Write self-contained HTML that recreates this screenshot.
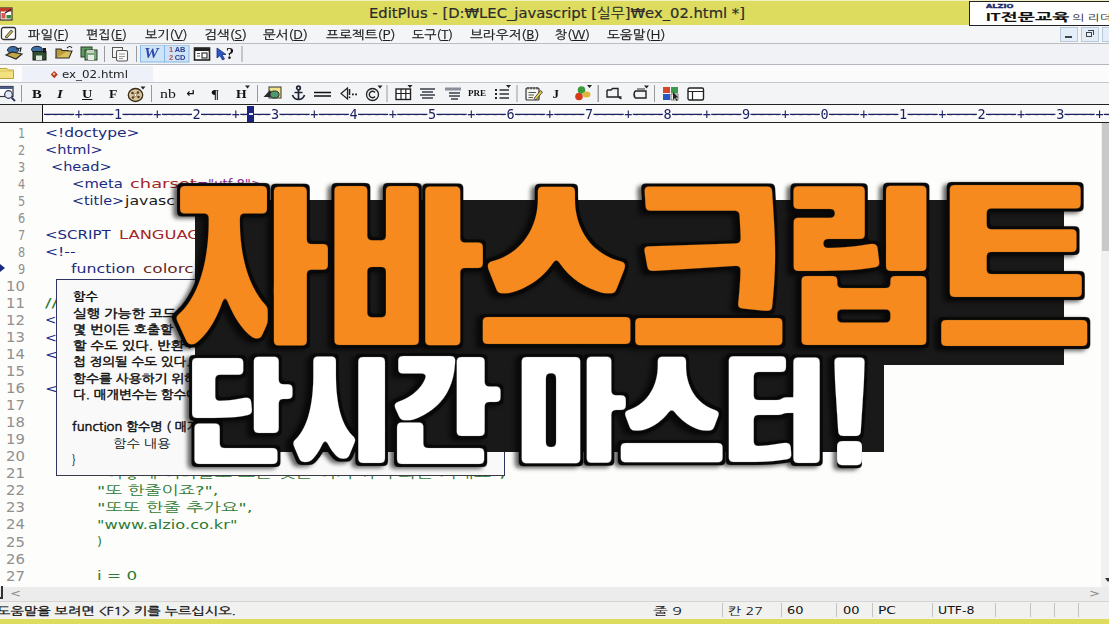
<!DOCTYPE html>
<html lang="ko"><head><meta charset="utf-8"><title>자바스크립트 단시간 마스터!</title>
<style>
html,body{margin:0;padding:0}
body{width:1109px;height:624px;overflow:hidden;position:relative;background:#fdfdfb;font-family:"Liberation Sans","NanumGothic","Noto Sans CJK KR",sans-serif}
.a{position:absolute}
.t{position:absolute;white-space:pre;transform-origin:0 50%;display:block}
.t u{text-decoration:underline;text-underline-offset:1px}
#app{position:absolute;left:0;top:0;width:1109px;height:624px;overflow:hidden}
.tb{top:85px;height:18px;line-height:18px;font-family:"Liberation Serif",serif;font-weight:700;font-size:13px;color:#111}
.sep{position:absolute;width:1px;background:#9a9a9a}
</style></head>
<body>
<div id="app">
<!-- code area -->
<div class="a" style="left:0;top:122px;width:1109px;height:466px;background:#fdfdfb"></div>
<div class="a" id="code" style="left:0;top:0;width:1109px;height:588px;overflow:hidden"><span class="t" style="left:18.0px;top:122.5px;height:20px;line-height:20px;font-family:'DejaVu Sans','NanumGothic','Noto Sans CJK KR',sans-serif;font-size:14px;font-weight:400;color:#8f8f8f;transform:scaleX(0.807);">1</span>
<span class="t" style="left:18.0px;top:139.5px;height:20px;line-height:20px;font-family:'DejaVu Sans','NanumGothic','Noto Sans CJK KR',sans-serif;font-size:14px;font-weight:400;color:#8f8f8f;transform:scaleX(0.807);">2</span>
<span class="t" style="left:18.0px;top:156.6px;height:20px;line-height:20px;font-family:'DejaVu Sans','NanumGothic','Noto Sans CJK KR',sans-serif;font-size:14px;font-weight:400;color:#8f8f8f;transform:scaleX(0.807);">3</span>
<span class="t" style="left:18.0px;top:173.6px;height:20px;line-height:20px;font-family:'DejaVu Sans','NanumGothic','Noto Sans CJK KR',sans-serif;font-size:14px;font-weight:400;color:#8f8f8f;transform:scaleX(0.807);">4</span>
<span class="t" style="left:18.0px;top:190.7px;height:20px;line-height:20px;font-family:'DejaVu Sans','NanumGothic','Noto Sans CJK KR',sans-serif;font-size:14px;font-weight:400;color:#8f8f8f;transform:scaleX(0.807);">5</span>
<span class="t" style="left:18.0px;top:207.7px;height:20px;line-height:20px;font-family:'DejaVu Sans','NanumGothic','Noto Sans CJK KR',sans-serif;font-size:14px;font-weight:400;color:#8f8f8f;transform:scaleX(0.807);">6</span>
<span class="t" style="left:18.0px;top:224.7px;height:20px;line-height:20px;font-family:'DejaVu Sans','NanumGothic','Noto Sans CJK KR',sans-serif;font-size:14px;font-weight:400;color:#8f8f8f;transform:scaleX(0.807);">7</span>
<span class="t" style="left:18.0px;top:241.8px;height:20px;line-height:20px;font-family:'DejaVu Sans','NanumGothic','Noto Sans CJK KR',sans-serif;font-size:14px;font-weight:400;color:#8f8f8f;transform:scaleX(0.807);">8</span>
<span class="t" style="left:18.0px;top:258.8px;height:20px;line-height:20px;font-family:'DejaVu Sans','NanumGothic','Noto Sans CJK KR',sans-serif;font-size:14px;font-weight:400;color:#8f8f8f;transform:scaleX(0.807);">9</span>
<span class="t" style="left:6.3px;top:275.9px;height:20px;line-height:20px;font-family:'DejaVu Sans','NanumGothic','Noto Sans CJK KR',sans-serif;font-size:14px;font-weight:400;color:#8f8f8f;transform:scaleX(1.060);">10</span>
<span class="t" style="left:6.3px;top:292.9px;height:20px;line-height:20px;font-family:'DejaVu Sans','NanumGothic','Noto Sans CJK KR',sans-serif;font-size:14px;font-weight:400;color:#8f8f8f;transform:scaleX(1.060);">11</span>
<span class="t" style="left:6.3px;top:309.9px;height:20px;line-height:20px;font-family:'DejaVu Sans','NanumGothic','Noto Sans CJK KR',sans-serif;font-size:14px;font-weight:400;color:#8f8f8f;transform:scaleX(1.060);">12</span>
<span class="t" style="left:6.3px;top:327.0px;height:20px;line-height:20px;font-family:'DejaVu Sans','NanumGothic','Noto Sans CJK KR',sans-serif;font-size:14px;font-weight:400;color:#8f8f8f;transform:scaleX(1.060);">13</span>
<span class="t" style="left:6.3px;top:344.0px;height:20px;line-height:20px;font-family:'DejaVu Sans','NanumGothic','Noto Sans CJK KR',sans-serif;font-size:14px;font-weight:400;color:#8f8f8f;transform:scaleX(1.060);">14</span>
<span class="t" style="left:6.3px;top:361.1px;height:20px;line-height:20px;font-family:'DejaVu Sans','NanumGothic','Noto Sans CJK KR',sans-serif;font-size:14px;font-weight:400;color:#8f8f8f;transform:scaleX(1.060);">15</span>
<span class="t" style="left:6.3px;top:378.1px;height:20px;line-height:20px;font-family:'DejaVu Sans','NanumGothic','Noto Sans CJK KR',sans-serif;font-size:14px;font-weight:400;color:#8f8f8f;transform:scaleX(1.060);">16</span>
<span class="t" style="left:6.3px;top:395.1px;height:20px;line-height:20px;font-family:'DejaVu Sans','NanumGothic','Noto Sans CJK KR',sans-serif;font-size:14px;font-weight:400;color:#8f8f8f;transform:scaleX(1.060);">17</span>
<span class="t" style="left:6.3px;top:412.2px;height:20px;line-height:20px;font-family:'DejaVu Sans','NanumGothic','Noto Sans CJK KR',sans-serif;font-size:14px;font-weight:400;color:#8f8f8f;transform:scaleX(1.060);">18</span>
<span class="t" style="left:6.3px;top:429.2px;height:20px;line-height:20px;font-family:'DejaVu Sans','NanumGothic','Noto Sans CJK KR',sans-serif;font-size:14px;font-weight:400;color:#8f8f8f;transform:scaleX(1.060);">19</span>
<span class="t" style="left:6.3px;top:446.3px;height:20px;line-height:20px;font-family:'DejaVu Sans','NanumGothic','Noto Sans CJK KR',sans-serif;font-size:14px;font-weight:400;color:#8f8f8f;transform:scaleX(1.060);">20</span>
<span class="t" style="left:6.3px;top:463.3px;height:20px;line-height:20px;font-family:'DejaVu Sans','NanumGothic','Noto Sans CJK KR',sans-serif;font-size:14px;font-weight:400;color:#8f8f8f;transform:scaleX(1.060);">21</span>
<span class="t" style="left:6.3px;top:480.3px;height:20px;line-height:20px;font-family:'DejaVu Sans','NanumGothic','Noto Sans CJK KR',sans-serif;font-size:14px;font-weight:400;color:#8f8f8f;transform:scaleX(1.060);">22</span>
<span class="t" style="left:6.3px;top:497.4px;height:20px;line-height:20px;font-family:'DejaVu Sans','NanumGothic','Noto Sans CJK KR',sans-serif;font-size:14px;font-weight:400;color:#8f8f8f;transform:scaleX(1.060);">23</span>
<span class="t" style="left:6.3px;top:514.4px;height:20px;line-height:20px;font-family:'DejaVu Sans','NanumGothic','Noto Sans CJK KR',sans-serif;font-size:14px;font-weight:400;color:#8f8f8f;transform:scaleX(1.060);">24</span>
<span class="t" style="left:6.3px;top:531.5px;height:20px;line-height:20px;font-family:'DejaVu Sans','NanumGothic','Noto Sans CJK KR',sans-serif;font-size:14px;font-weight:400;color:#8f8f8f;transform:scaleX(1.060);">25</span>
<span class="t" style="left:6.3px;top:548.5px;height:20px;line-height:20px;font-family:'DejaVu Sans','NanumGothic','Noto Sans CJK KR',sans-serif;font-size:14px;font-weight:400;color:#8f8f8f;transform:scaleX(1.060);">26</span>
<span class="t" style="left:6.3px;top:565.5px;height:20px;line-height:20px;font-family:'DejaVu Sans','NanumGothic','Noto Sans CJK KR',sans-serif;font-size:14px;font-weight:400;color:#8f8f8f;transform:scaleX(1.060);">27</span>
<span class="t" style="left:44.6px;top:123.0px;height:19px;line-height:19px;font-family:'DejaVu Sans','NanumGothic','Noto Sans CJK KR',sans-serif;font-size:13px;font-weight:400;color:#1b2a80;transform:scaleX(1.190);">&lt;!doctype&gt;</span>
<span class="t" style="left:44.6px;top:140.0px;height:19px;line-height:19px;font-family:'DejaVu Sans','NanumGothic','Noto Sans CJK KR',sans-serif;font-size:13px;font-weight:400;color:#1b2a80;transform:scaleX(1.122);">&lt;html&gt;</span>
<span class="t" style="left:51.4px;top:157.1px;height:19px;line-height:19px;font-family:'DejaVu Sans','NanumGothic','Noto Sans CJK KR',sans-serif;font-size:13px;font-weight:400;color:#1b2a80;transform:scaleX(1.117);">&lt;head&gt;</span>
<span class="t" style="left:72.0px;top:174.1px;height:19px;line-height:19px;font-family:'DejaVu Sans','NanumGothic','Noto Sans CJK KR',sans-serif;font-size:13px;font-weight:400;color:#1b2a80;transform:scaleX(1.138);">&lt;meta</span>
<span class="t" style="left:130.3px;top:174.1px;height:19px;line-height:19px;font-family:'DejaVu Sans','NanumGothic','Noto Sans CJK KR',sans-serif;font-size:13px;font-weight:400;color:#a3262a;transform:scaleX(1.373);">charset</span>
<span class="t" style="left:197.0px;top:174.1px;height:19px;line-height:19px;font-family:'DejaVu Sans','NanumGothic','Noto Sans CJK KR',sans-serif;font-size:13px;font-weight:400;color:#8a2a9a;transform:scaleX(1.017);">="utf-8"&gt;</span>
<span class="t" style="left:72.0px;top:191.2px;height:19px;line-height:19px;font-family:'DejaVu Sans','NanumGothic','Noto Sans CJK KR',sans-serif;font-size:13px;font-weight:400;color:#1b2a80;transform:scaleX(1.102);">&lt;title&gt;</span>
<span class="t" style="left:125.0px;top:191.2px;height:19px;line-height:19px;font-family:'DejaVu Sans','NanumGothic','Noto Sans CJK KR',sans-serif;font-size:13px;font-weight:400;color:#1a1a1a;transform:scaleX(1.214);">javasc</span>
<span class="t" style="left:44.6px;top:225.2px;height:19px;line-height:19px;font-family:'DejaVu Sans','NanumGothic','Noto Sans CJK KR',sans-serif;font-size:13px;font-weight:400;color:#1b2a80;transform:scaleX(1.155);">&lt;SCRIPT</span>
<span class="t" style="left:119.0px;top:225.2px;height:19px;line-height:19px;font-family:'DejaVu Sans','NanumGothic','Noto Sans CJK KR',sans-serif;font-size:13px;font-weight:400;color:#a3262a;transform:scaleX(1.256);">LANGUAG</span>
<span class="t" style="left:44.6px;top:242.3px;height:19px;line-height:19px;font-family:'DejaVu Sans','NanumGothic','Noto Sans CJK KR',sans-serif;font-size:13px;font-weight:400;color:#1b2a80;transform:scaleX(1.200);">&lt;!--</span>
<span class="t" style="left:71.0px;top:259.3px;height:19px;line-height:19px;font-family:'DejaVu Sans','NanumGothic','Noto Sans CJK KR',sans-serif;font-size:13px;font-weight:400;color:#1b2a80;transform:scaleX(1.211);">function</span>
<span class="t" style="left:143.4px;top:259.3px;height:19px;line-height:19px;font-family:'DejaVu Sans','NanumGothic','Noto Sans CJK KR',sans-serif;font-size:13px;font-weight:400;color:#6a2a2a;transform:scaleX(1.302);">colorc</span>
<span class="t" style="left:44.6px;top:293.4px;height:19px;line-height:19px;font-family:'DejaVu Sans','NanumGothic','Noto Sans CJK KR',sans-serif;font-size:13px;font-weight:400;color:#2c7a33;transform:scaleX(1.494);">//--&gt;</span>
<span class="t" style="left:45.0px;top:310.4px;height:19px;line-height:19px;font-family:'DejaVu Sans','NanumGothic','Noto Sans CJK KR',sans-serif;font-size:13px;font-weight:400;color:#1b2a80;transform:scaleX(1.033);">&lt;/SCR</span>
<span class="t" style="left:45.0px;top:327.5px;height:19px;line-height:19px;font-family:'DejaVu Sans','NanumGothic','Noto Sans CJK KR',sans-serif;font-size:13px;font-weight:400;color:#1b2a80;transform:scaleX(1.089);">&lt;/hea</span>
<span class="t" style="left:45.0px;top:344.5px;height:19px;line-height:19px;font-family:'DejaVu Sans','NanumGothic','Noto Sans CJK KR',sans-serif;font-size:13px;font-weight:400;color:#1b2a80;transform:scaleX(1.216);">&lt;bod</span>
<span class="t" style="left:45.0px;top:378.6px;height:19px;line-height:19px;font-family:'DejaVu Sans','NanumGothic','Noto Sans CJK KR',sans-serif;font-size:13px;font-weight:400;color:#1b2a80;transform:scaleX(1.273);">&lt;scri</span>
<span class="t" style="left:96.5px;top:464.3px;height:19px;line-height:19px;font-family:'DejaVu Sans','NanumGothic','Noto Sans CJK KR',sans-serif;font-size:13px;font-weight:400;color:#2c7a33;transform:scaleX(1.411);">"이렇게 여러줄로 쓰는 것은 여기 까지 되는 거네요",</span>
<span class="t" style="left:96.5px;top:480.8px;height:19px;line-height:19px;font-family:'DejaVu Sans','NanumGothic','Noto Sans CJK KR',sans-serif;font-size:13px;font-weight:400;color:#2c7a33;transform:scaleX(1.377);">"또 한줄이죠?",</span>
<span class="t" style="left:96.5px;top:497.9px;height:19px;line-height:19px;font-family:'DejaVu Sans','NanumGothic','Noto Sans CJK KR',sans-serif;font-size:13px;font-weight:400;color:#2c7a33;transform:scaleX(1.415);">"또또 한줄 추가요",</span>
<span class="t" style="left:96.5px;top:514.9px;height:19px;line-height:19px;font-family:'DejaVu Sans','NanumGothic','Noto Sans CJK KR',sans-serif;font-size:13px;font-weight:400;color:#2c7a33;transform:scaleX(1.247);">"www.alzio.co.kr"</span>
<span class="t" style="left:96.5px;top:532.0px;height:19px;line-height:19px;font-family:'DejaVu Sans','NanumGothic','Noto Sans CJK KR',sans-serif;font-size:13px;font-weight:400;color:#2c7a33;transform:scaleX(0.985);">)</span>
<span class="t" style="left:96.5px;top:566.0px;height:19px;line-height:19px;font-family:'DejaVu Sans','NanumGothic','Noto Sans CJK KR',sans-serif;font-size:13px;font-weight:400;color:#2c7a33;transform:scaleX(1.292);">i = 0</span>
<!-- current line arrow -->
<div class="a" style="left:0;top:264px;width:0;height:0;border-left:5px solid #1b2a80;border-top:4px solid transparent;border-bottom:4px solid transparent"></div>
</div>
<!-- vertical scrollbar -->
<div class="a" style="left:1101px;top:123px;width:8px;height:464px;background:#f1f1f1"></div>
<div class="a" style="left:1102px;top:123px;width:7px;height:128px;background:#c9c9c9"></div>
<div class="a" style="left:1105px;top:578px;width:0;height:0;border-top:4px solid #333;border-left:3px solid transparent;border-right:3px solid transparent"></div>
<!-- tooltip -->
<div class="a" id="tip" style="left:56px;top:279px;width:447px;height:195px;background:#f9f9fa;border:1px solid #2e3560;border-bottom-color:#3a3a44;border-right-color:#2e3560;box-sizing:content-box;overflow:hidden"></div>
<div class="a" style="left:0;top:0;width:504px;height:476px;overflow:hidden"><span class="t" style="left:72.7px;top:288.2px;height:18px;line-height:18px;font-family:'NanumGothic','Noto Sans CJK KR',sans-serif;font-size:12px;font-weight:700;color:#111;transform:scaleX(1.108);">함수</span>
<span class="t" style="left:72.7px;top:304.5px;height:18px;line-height:18px;font-family:'NanumGothic','Noto Sans CJK KR',sans-serif;font-size:12px;font-weight:400;color:#111;transform:scaleX(1.206);-webkit-text-stroke:0.45px #111;">실행 가능한 코드를 함수로 정의하면</span>
<span class="t" style="left:72.7px;top:320.8px;height:18px;line-height:18px;font-family:'NanumGothic','Noto Sans CJK KR',sans-serif;font-size:12px;font-weight:400;color:#111;transform:scaleX(1.171);-webkit-text-stroke:0.45px #111;">몇 번이든 호출할 수 있으며 값을 반환</span>
<span class="t" style="left:72.7px;top:337.0px;height:18px;line-height:18px;font-family:'NanumGothic','Noto Sans CJK KR',sans-serif;font-size:12px;font-weight:400;color:#111;transform:scaleX(1.201);-webkit-text-stroke:0.45px #111;">할 수도 있다. 반환 자료형과 함수는 중</span>
<span class="t" style="left:72.7px;top:353.3px;height:18px;line-height:18px;font-family:'NanumGothic','Noto Sans CJK KR',sans-serif;font-size:12px;font-weight:400;color:#111;transform:scaleX(1.129);-webkit-text-stroke:0.45px #111;">첩 정의될 수도 있다. 자바스크립트에서</span>
<span class="t" style="left:72.7px;top:369.6px;height:18px;line-height:18px;font-family:'NanumGothic','Noto Sans CJK KR',sans-serif;font-size:12px;font-weight:400;color:#111;transform:scaleX(1.148);-webkit-text-stroke:0.45px #111;">함수를 사용하기 위해서는 먼저 선언한</span>
<span class="t" style="left:72.7px;top:385.9px;height:18px;line-height:18px;font-family:'NanumGothic','Noto Sans CJK KR',sans-serif;font-size:12px;font-weight:400;color:#111;transform:scaleX(1.126);-webkit-text-stroke:0.45px #111;">다. 매개변수는 함수에 전달되는 값이다.</span>
<span class="t" style="left:72.0px;top:418.4px;height:18px;line-height:18px;font-family:'NanumGothic','Noto Sans CJK KR',sans-serif;font-size:12px;font-weight:400;color:#111;transform:scaleX(1.081);-webkit-text-stroke:0.45px #111;">function 함수명 ( 매개변수 ) {</span>
<span class="t" style="left:112.8px;top:434.7px;height:18px;line-height:18px;font-family:'NanumGothic','Noto Sans CJK KR',sans-serif;font-size:12px;font-weight:400;color:#111;transform:scaleX(1.188);">함수 내용</span>
<span class="t" style="left:72.0px;top:451.0px;height:18px;line-height:18px;font-family:'NanumGothic','Noto Sans CJK KR',sans-serif;font-size:12px;font-weight:400;color:#111;transform:scaleX(0.961);">}</span></div>
<!-- black blocks -->
<div class="a" style="left:195px;top:200px;width:869px;height:165px;background:#191919"></div>
<div class="a" style="left:195px;top:364px;width:689px;height:88px;background:#191919"></div>
<!-- big text -->
<div id="big" class="a" style="left:0;top:0;width:1109px;height:624px"><svg class="a" width="1109" height="624" viewBox="0 0 1109 624" style="left:0;top:0" font-family="Noto Sans CJK KR, NanumGothic, sans-serif" font-weight="900" font-size="200">
<defs><clipPath id="k1"><polygon points="-150,-337 115,-337 115,263 -150,263"/></clipPath><clipPath id="k2"><polygon points="123,-337 450,-337 450,263 123,263"/></clipPath><clipPath id="k3"><polygon points="-150,-337 114,-337 114,263 -150,263"/></clipPath><clipPath id="k4"><polygon points="114,-337 450,-337 450,263 114,263"/></clipPath><clipPath id="k5"><polygon points="-150,-337 450,-337 450,-42 -150,-42"/></clipPath><clipPath id="k6"><polygon points="-150,-42 450,-42 450,263 -150,263"/></clipPath><clipPath id="k7"><polygon points="-150,-337 450,-337 450,-32 -150,-32"/></clipPath><clipPath id="k8"><polygon points="-150,-32 450,-32 450,263 -150,263"/></clipPath><clipPath id="k9"><polygon points="-150,-337 128,-337 128,-61 -150,-61"/></clipPath><clipPath id="k10"><polygon points="128,-337 450,-337 450,-59.5 128,-59.5"/></clipPath><clipPath id="k11"><polygon points="-150,-59.5 450,-59.5 450,263 -150,263"/></clipPath><clipPath id="k12"><polygon points="-150,-337 450,-337 450,-38 -150,-38"/></clipPath><clipPath id="k13"><polygon points="-150,-38 450,-38 450,263 -150,263"/></clipPath><clipPath id="k14"><polygon points="-150,-337 119.5,-337 119.5,-54.5 -150,-54.5"/></clipPath><clipPath id="k15"><polygon points="119.5,-337 450,-337 450,-21 119.5,-21"/></clipPath><clipPath id="k16"><polygon points="-150,-54.5 119.5,-54.5 119.5,-21 450,-21 450,263 -150,263"/></clipPath><clipPath id="k17"><polygon points="-150,-337 130,-337 130,263 -150,263"/></clipPath><clipPath id="k18"><polygon points="130,-337 450,-337 450,263 130,263"/></clipPath><clipPath id="k19"><polygon points="-150,-337 114,-337 114,-50.5 -150,-50.5"/></clipPath><clipPath id="k20"><polygon points="114,-337 450,-337 450,-22.5 114,-22.5"/></clipPath><clipPath id="k21"><polygon points="-150,-50.5 114,-50.5 114,-22.5 450,-22.5 450,263 -150,263"/></clipPath><clipPath id="k22"><polygon points="-150,-337 113.5,-337 113.5,263 -150,263"/></clipPath><clipPath id="k23"><polygon points="113.5,-337 450,-337 450,263 113.5,263"/></clipPath><clipPath id="k24"><polygon points="-150,-337 450,-337 450,-42 -150,-42"/></clipPath><clipPath id="k25"><polygon points="-150,-42 450,-42 450,263 -150,263"/></clipPath><clipPath id="k26"><polygon points="-150,-337 134,-337 134,263 -150,263"/></clipPath><clipPath id="k27"><polygon points="134,-337 450,-337 450,263 134,263"/></clipPath><clipPath id="k28"><polygon points="-150,-337 450,-337 450,-47.5 -150,-47.5"/></clipPath><clipPath id="k29"><polygon points="-150,-47.5 450,-47.5 450,263 -150,263"/></clipPath><filter id="fb0" x="-20%" y="-20%" width="140%" height="140%" color-interpolation-filters="sRGB"><feMorphology in="SourceGraphic" operator="dilate" radius="6 1"/><feGaussianBlur stdDeviation="2.0"/><feComponentTransfer><feFuncA type="linear" slope="5" intercept="-2.0"/></feComponentTransfer></filter><filter id="ff0" x="-20%" y="-20%" width="140%" height="140%" color-interpolation-filters="sRGB"><feMorphology in="SourceGraphic" operator="erode" radius="0 2"/><feMorphology operator="dilate" radius="3 0"/><feGaussianBlur stdDeviation="2.0"/><feComponentTransfer><feFuncA type="linear" slope="5" intercept="-2.0"/></feComponentTransfer></filter><filter id="fb1" x="-20%" y="-20%" width="140%" height="140%" color-interpolation-filters="sRGB"><feMorphology in="SourceGraphic" operator="dilate" radius="6 5"/><feGaussianBlur stdDeviation="2.0"/><feComponentTransfer><feFuncA type="linear" slope="5" intercept="-2.0"/></feComponentTransfer></filter><filter id="ff1" x="-20%" y="-20%" width="140%" height="140%" color-interpolation-filters="sRGB"><feMorphology in="SourceGraphic" operator="dilate" radius="3 2"/><feGaussianBlur stdDeviation="2.0"/><feComponentTransfer><feFuncA type="linear" slope="5" intercept="-2.0"/></feComponentTransfer></filter><filter id="fb2" x="-20%" y="-20%" width="140%" height="140%" color-interpolation-filters="sRGB"><feMorphology in="SourceGraphic" operator="dilate" radius="8 5"/><feGaussianBlur stdDeviation="2.0"/><feComponentTransfer><feFuncA type="linear" slope="5" intercept="-2.0"/></feComponentTransfer></filter><filter id="ff2" x="-20%" y="-20%" width="140%" height="140%" color-interpolation-filters="sRGB"><feMorphology in="SourceGraphic" operator="dilate" radius="5 2"/><feGaussianBlur stdDeviation="2.0"/><feComponentTransfer><feFuncA type="linear" slope="5" intercept="-2.0"/></feComponentTransfer></filter><filter id="fb3" x="-20%" y="-20%" width="140%" height="140%" color-interpolation-filters="sRGB"><feMorphology in="SourceGraphic" operator="dilate" radius="6 3"/><feGaussianBlur stdDeviation="2.0"/><feComponentTransfer><feFuncA type="linear" slope="5" intercept="-2.0"/></feComponentTransfer></filter><filter id="ff3" x="-20%" y="-20%" width="140%" height="140%" color-interpolation-filters="sRGB"><feMorphology in="SourceGraphic" operator="dilate" radius="3 0"/><feGaussianBlur stdDeviation="2.0"/><feComponentTransfer><feFuncA type="linear" slope="5" intercept="-2.0"/></feComponentTransfer></filter><filter id="fb4" x="-20%" y="-20%" width="140%" height="140%" color-interpolation-filters="sRGB"><feMorphology in="SourceGraphic" operator="dilate" radius="6 2"/><feGaussianBlur stdDeviation="2.0"/><feComponentTransfer><feFuncA type="linear" slope="5" intercept="-2.0"/></feComponentTransfer></filter><filter id="ff4" x="-20%" y="-20%" width="140%" height="140%" color-interpolation-filters="sRGB"><feMorphology in="SourceGraphic" operator="erode" radius="0 1"/><feMorphology operator="dilate" radius="3 0"/><feGaussianBlur stdDeviation="2.0"/><feComponentTransfer><feFuncA type="linear" slope="5" intercept="-2.0"/></feComponentTransfer></filter><filter id="fb5" x="-20%" y="-20%" width="140%" height="140%" color-interpolation-filters="sRGB"><feMorphology in="SourceGraphic" operator="dilate" radius="6 3"/><feGaussianBlur stdDeviation="2.0"/><feComponentTransfer><feFuncA type="linear" slope="5" intercept="-2.0"/></feComponentTransfer></filter><filter id="ff5" x="-20%" y="-20%" width="140%" height="140%" color-interpolation-filters="sRGB"><feMorphology in="SourceGraphic" operator="dilate" radius="3 0"/><feGaussianBlur stdDeviation="2.0"/><feComponentTransfer><feFuncA type="linear" slope="5" intercept="-2.0"/></feComponentTransfer></filter><filter id="fb6" x="-20%" y="-20%" width="140%" height="140%" color-interpolation-filters="sRGB"><feMorphology in="SourceGraphic" operator="dilate" radius="7 3"/><feGaussianBlur stdDeviation="2.0"/><feComponentTransfer><feFuncA type="linear" slope="5" intercept="-2.0"/></feComponentTransfer></filter><filter id="ff6" x="-20%" y="-20%" width="140%" height="140%" color-interpolation-filters="sRGB"><feMorphology in="SourceGraphic" operator="dilate" radius="4 0"/><feGaussianBlur stdDeviation="2.0"/><feComponentTransfer><feFuncA type="linear" slope="5" intercept="-2.0"/></feComponentTransfer></filter><filter id="fb7" x="-20%" y="-20%" width="140%" height="140%" color-interpolation-filters="sRGB"><feMorphology in="SourceGraphic" operator="dilate" radius="8 4"/><feGaussianBlur stdDeviation="2.0"/><feComponentTransfer><feFuncA type="linear" slope="5" intercept="-2.0"/></feComponentTransfer></filter><filter id="ff7" x="-20%" y="-20%" width="140%" height="140%" color-interpolation-filters="sRGB"><feMorphology in="SourceGraphic" operator="dilate" radius="5 1"/><feGaussianBlur stdDeviation="2.0"/><feComponentTransfer><feFuncA type="linear" slope="5" intercept="-2.0"/></feComponentTransfer></filter><filter id="fb8" x="-20%" y="-20%" width="140%" height="140%" color-interpolation-filters="sRGB"><feMorphology in="SourceGraphic" operator="dilate" radius="6 0"/><feGaussianBlur stdDeviation="2.0"/><feComponentTransfer><feFuncA type="linear" slope="5" intercept="-2.0"/></feComponentTransfer></filter><filter id="ff8" x="-20%" y="-20%" width="140%" height="140%" color-interpolation-filters="sRGB"><feMorphology in="SourceGraphic" operator="erode" radius="0 3"/><feMorphology operator="dilate" radius="3 0"/><feGaussianBlur stdDeviation="2.0"/><feComponentTransfer><feFuncA type="linear" slope="5" intercept="-2.0"/></feComponentTransfer></filter><filter id="fb9" x="-20%" y="-20%" width="140%" height="140%" color-interpolation-filters="sRGB"><feMorphology in="SourceGraphic" operator="dilate" radius="8 3"/><feGaussianBlur stdDeviation="2.0"/><feComponentTransfer><feFuncA type="linear" slope="5" intercept="-2.0"/></feComponentTransfer></filter><filter id="ff9" x="-20%" y="-20%" width="140%" height="140%" color-interpolation-filters="sRGB"><feMorphology in="SourceGraphic" operator="dilate" radius="5 0"/><feGaussianBlur stdDeviation="2.0"/><feComponentTransfer><feFuncA type="linear" slope="5" intercept="-2.0"/></feComponentTransfer></filter><filter id="fb10" x="-20%" y="-20%" width="140%" height="140%" color-interpolation-filters="sRGB"><feMorphology in="SourceGraphic" operator="dilate" radius="12 11"/><feGaussianBlur stdDeviation="2.0"/><feComponentTransfer><feFuncA type="linear" slope="5" intercept="-2.0"/></feComponentTransfer></filter><filter id="ff10" x="-20%" y="-20%" width="140%" height="140%" color-interpolation-filters="sRGB"><feMorphology in="SourceGraphic" operator="dilate" radius="9 8"/><feGaussianBlur stdDeviation="2.0"/><feComponentTransfer><feFuncA type="linear" slope="5" intercept="-2.0"/></feComponentTransfer></filter></defs>
<g style="filter:drop-shadow(-3.5px 2px 2px rgba(0,0,0,.6))"><g fill="#080808"><g filter="url(#fb0)"><g transform="translate(175.27 365.48) scale(0.7783 1.1923)"><g clip-path="url(#k1)"><text>자</text></g></g></g>
<g filter="url(#fb0)"><g transform="translate(327.40 376.11) scale(0.8414 1.2378)"><g clip-path="url(#k3)"><text>바</text></g></g></g>
<g filter="url(#fb0)"><g transform="translate(479.66 348.67) scale(0.8341 1.1846)"><g clip-path="url(#k6)"><text>스</text></g></g></g>
<g filter="url(#fb0)"><g transform="translate(635.12 354.04) scale(0.8946 1.1026) skewX(4.5)"><g clip-path="url(#k7)"><text>크</text></g></g></g>
<g filter="url(#fb0)"><g transform="translate(632.18 347.59) scale(0.8318 1.1885)"><g clip-path="url(#k8)"><text>크</text></g></g></g>
<g filter="url(#fb0)"><g transform="translate(749.00 326.15) scale(1.0625 0.8396)"><g clip-path="url(#k10)"><text>립</text></g></g></g>
<g filter="url(#fb0)"><g transform="translate(928.21 352.28) scale(0.9440 1.0771)"><g clip-path="url(#k12)"><text>트</text></g></g></g>
<g filter="url(#fb0)"><g transform="translate(938.23 347.55) scale(0.8250 1.1500)"><g clip-path="url(#k13)"><text>트</text></g></g></g></g>
<g fill="#080808"><g filter="url(#fb1)"><g transform="translate(173.65 326.82) scale(0.8362 0.8199)"><g clip-path="url(#k2)"><text>자</text></g></g></g>
<g filter="url(#fb1)"><g transform="translate(317.72 326.82) scale(0.8966 0.8199)"><g clip-path="url(#k4)"><text>바</text></g></g></g></g>
<g fill="#080808"><g filter="url(#fb2)"><g transform="translate(484.63 347.64) scale(0.7870 1.0025)"><g clip-path="url(#k5)"><text>스</text></g></g></g></g>
<g fill="#080808"><g filter="url(#fb3)"><g transform="translate(784.00 330.30) scale(0.7500 0.8947)"><g clip-path="url(#k9)"><text>립</text></g></g></g></g>
<g fill="#080808"><g filter="url(#fb4)"><g transform="translate(769.58 329.06) scale(0.9370 0.9610)"><g clip-path="url(#k11)"><text>립</text></g></g></g></g>
<g fill="#080808"><g filter="url(#fb5)"><g transform="translate(188.05 458.67) scale(0.5344 0.6559)"><g clip-path="url(#k14)"><text>단</text></g></g></g>
<g filter="url(#fb5)"><g transform="translate(184.18 451.69) scale(0.5873 0.5603)"><g clip-path="url(#k15)"><text>단</text></g></g></g>
<g filter="url(#fb5)"><g transform="translate(177.90 452.69) scale(0.5969 0.6254)"><g clip-path="url(#k16)"><text>단</text></g></g></g>
<g filter="url(#fb5)"><g transform="translate(276.94 452.02) scale(0.6406 0.5622)"><g clip-path="url(#k18)"><text>시</text></g></g></g>
<g filter="url(#fb5)"><g transform="translate(376.26 456.62) scale(0.6768 0.5895)"><g clip-path="url(#k20)"><text>간</text></g></g></g>
<g filter="url(#fb5)"><g transform="translate(379.78 452.73) scale(0.6287 0.6231)"><g clip-path="url(#k21)"><text>간</text></g></g></g>
<g filter="url(#fb5)"><g transform="translate(518.88 452.02) scale(0.5741 0.5622)"><g clip-path="url(#k23)"><text>마</text></g></g></g>
<g filter="url(#fb5)"><g transform="translate(619.65 464.18) scale(0.5641 0.7385)"><g clip-path="url(#k25)"><text>스</text></g></g></g>
<g filter="url(#fb5)"><g transform="translate(710.78 451.51) scale(0.6375 0.5593)"><g clip-path="url(#k27)"><text>터</text></g></g></g>
<g filter="url(#fb5)"><g transform="translate(822.17 478.22) scale(0.6833 0.7929)"><g clip-path="url(#k28)"><text>!</text></g></g></g></g>
<g fill="#080808"><g filter="url(#fb6)"><g transform="translate(294.50 475.72) scale(0.4492 0.7659)"><g clip-path="url(#k17)"><text>시</text></g></g></g></g>
<g fill="#080808"><g filter="url(#fb7)"><g transform="translate(396.44 451.00) scale(0.5120 0.6000)"><g clip-path="url(#k19)"><text>간</text></g></g></g></g>
<g fill="#080808"><g filter="url(#fb8)"><g transform="translate(518.04 488.75) scale(0.5717 0.8865)"><g clip-path="url(#k22)"><text>마</text></g></g></g>
<g filter="url(#fb8)"><g transform="translate(722.87 483.34) scale(0.5887 0.8398)"><g clip-path="url(#k26)"><text>터</text></g></g></g></g>
<g fill="#080808"><g filter="url(#fb9)"><g transform="translate(623.72 471.73) scale(0.5284 0.7216)"><g clip-path="url(#k24)"><text>스</text></g></g></g></g>
<g fill="#080808"><g filter="url(#fb10)"><g transform="translate(840.93 456.89) scale(0.2143 0.2023)"><g clip-path="url(#k29)"><text>!</text></g></g></g></g></g>
<g fill="#f68a1e"><g filter="url(#ff0)"><g transform="translate(175.27 365.48) scale(0.7783 1.1923)"><g clip-path="url(#k1)"><text>자</text></g></g></g>
<g filter="url(#ff0)"><g transform="translate(327.40 376.11) scale(0.8414 1.2378)"><g clip-path="url(#k3)"><text>바</text></g></g></g>
<g filter="url(#ff0)"><g transform="translate(479.66 348.67) scale(0.8341 1.1846)"><g clip-path="url(#k6)"><text>스</text></g></g></g>
<g filter="url(#ff0)"><g transform="translate(635.12 354.04) scale(0.8946 1.1026) skewX(4.5)"><g clip-path="url(#k7)"><text>크</text></g></g></g>
<g filter="url(#ff0)"><g transform="translate(632.18 347.59) scale(0.8318 1.1885)"><g clip-path="url(#k8)"><text>크</text></g></g></g>
<g filter="url(#ff0)"><g transform="translate(749.00 326.15) scale(1.0625 0.8396)"><g clip-path="url(#k10)"><text>립</text></g></g></g>
<g filter="url(#ff0)"><g transform="translate(928.21 352.28) scale(0.9440 1.0771)"><g clip-path="url(#k12)"><text>트</text></g></g></g>
<g filter="url(#ff0)"><g transform="translate(938.23 347.55) scale(0.8250 1.1500)"><g clip-path="url(#k13)"><text>트</text></g></g></g></g>
<g fill="#f68a1e"><g filter="url(#ff1)"><g transform="translate(173.65 326.82) scale(0.8362 0.8199)"><g clip-path="url(#k2)"><text>자</text></g></g></g>
<g filter="url(#ff1)"><g transform="translate(317.72 326.82) scale(0.8966 0.8199)"><g clip-path="url(#k4)"><text>바</text></g></g></g></g>
<g fill="#f68a1e"><g filter="url(#ff2)"><g transform="translate(484.63 347.64) scale(0.7870 1.0025)"><g clip-path="url(#k5)"><text>스</text></g></g></g></g>
<g fill="#f68a1e"><g filter="url(#ff3)"><g transform="translate(784.00 330.30) scale(0.7500 0.8947)"><g clip-path="url(#k9)"><text>립</text></g></g></g></g>
<g fill="#f68a1e"><g filter="url(#ff4)"><g transform="translate(769.58 329.06) scale(0.9370 0.9610)"><g clip-path="url(#k11)"><text>립</text></g></g></g></g>
<g fill="#ffffff"><g filter="url(#ff5)"><g transform="translate(188.05 458.67) scale(0.5344 0.6559)"><g clip-path="url(#k14)"><text>단</text></g></g></g>
<g filter="url(#ff5)"><g transform="translate(184.18 451.69) scale(0.5873 0.5603)"><g clip-path="url(#k15)"><text>단</text></g></g></g>
<g filter="url(#ff5)"><g transform="translate(177.90 452.69) scale(0.5969 0.6254)"><g clip-path="url(#k16)"><text>단</text></g></g></g>
<g filter="url(#ff5)"><g transform="translate(276.94 452.02) scale(0.6406 0.5622)"><g clip-path="url(#k18)"><text>시</text></g></g></g>
<g filter="url(#ff5)"><g transform="translate(376.26 456.62) scale(0.6768 0.5895)"><g clip-path="url(#k20)"><text>간</text></g></g></g>
<g filter="url(#ff5)"><g transform="translate(379.78 452.73) scale(0.6287 0.6231)"><g clip-path="url(#k21)"><text>간</text></g></g></g>
<g filter="url(#ff5)"><g transform="translate(518.88 452.02) scale(0.5741 0.5622)"><g clip-path="url(#k23)"><text>마</text></g></g></g>
<g filter="url(#ff5)"><g transform="translate(619.65 464.18) scale(0.5641 0.7385)"><g clip-path="url(#k25)"><text>스</text></g></g></g>
<g filter="url(#ff5)"><g transform="translate(710.78 451.51) scale(0.6375 0.5593)"><g clip-path="url(#k27)"><text>터</text></g></g></g>
<g filter="url(#ff5)"><g transform="translate(822.17 478.22) scale(0.6833 0.7929)"><g clip-path="url(#k28)"><text>!</text></g></g></g></g>
<g fill="#ffffff"><g filter="url(#ff6)"><g transform="translate(294.50 475.72) scale(0.4492 0.7659)"><g clip-path="url(#k17)"><text>시</text></g></g></g></g>
<g fill="#ffffff"><g filter="url(#ff7)"><g transform="translate(396.44 451.00) scale(0.5120 0.6000)"><g clip-path="url(#k19)"><text>간</text></g></g></g></g>
<g fill="#ffffff"><g filter="url(#ff8)"><g transform="translate(518.04 488.75) scale(0.5717 0.8865)"><g clip-path="url(#k22)"><text>마</text></g></g></g>
<g filter="url(#ff8)"><g transform="translate(722.87 483.34) scale(0.5887 0.8398)"><g clip-path="url(#k26)"><text>터</text></g></g></g></g>
<g fill="#ffffff"><g filter="url(#ff9)"><g transform="translate(623.72 471.73) scale(0.5284 0.7216)"><g clip-path="url(#k24)"><text>스</text></g></g></g></g>
<g fill="#ffffff"><g filter="url(#ff10)"><g transform="translate(840.93 456.89) scale(0.2143 0.2023)"><g clip-path="url(#k29)"><text>!</text></g></g></g></g>
</svg></div>
<!-- top chrome -->
<div class="a" style="left:0;top:0;width:1109px;height:25px;background:#dddc5e"></div>
<div class="a" style="left:0;top:0;width:1109px;height:1px;background:#f0f0c0"></div>
<div class="a" style="left:0;top:25px;width:1109px;height:18px;background:#f4f5f7"></div>
<div class="a" style="left:0;top:43px;width:1109px;height:1px;background:#b9bcc2"></div>
<div class="a" style="left:0;top:44px;width:1109px;height:20px;background:#f1f2f5"></div>
<div class="a" style="left:0;top:64px;width:1109px;height:1px;background:#b4b7bd"></div>
<div class="a" style="left:0;top:65px;width:1109px;height:17px;background:#fbfbfc"></div>
<div class="a" style="left:22px;top:66px;width:131px;height:16px;background:#eef2f8"></div>
<div class="a" style="left:0;top:82px;width:1109px;height:1px;background:#c3c6cb"></div>
<div class="a" style="left:0;top:83px;width:1109px;height:21px;background:#f3f4f6"></div>
<!-- ruler -->
<div class="a" style="left:0;top:104px;width:1109px;height:19px;background:#ececec"></div>
<div class="a" style="left:42px;top:104px;width:1067px;height:19px;background:#fafafa"></div>
<div class="a" style="left:0;top:104px;width:1109px;height:1px;background:#222"></div>
<div class="a" style="left:0;top:122px;width:1109px;height:1px;background:#222"></div>
<div class="a" style="left:42px;top:104px;width:1px;height:19px;background:#111"></div>
<div class="a" id="ruler" style="left:43px;top:105px;width:1066px;height:17px;overflow:hidden"><svg class="a" style="left:0;top:0" width="1066" height="17" viewBox="0 0 1066 17"><path d="M1.0 9.4 H31.2 M40.2 9.4 H70.5 M79.5 9.4 H109.7 M118.8 9.4 H149.0 M158.0 9.4 H188.2 M197.2 9.4 H227.4 M236.5 9.4 H266.7 M275.8 9.4 H305.9 M315.0 9.4 H345.2 M354.2 9.4 H384.4 M393.5 9.4 H423.7 M432.8 9.4 H462.9 M472.0 9.4 H502.2 M511.2 9.4 H541.4 M550.5 9.4 H580.7 M589.8 9.4 H619.9 M629.0 9.4 H659.2 M668.2 9.4 H698.4 M707.5 9.4 H737.7 M746.8 9.4 H776.9 M786.0 9.4 H816.2 M825.2 9.4 H855.4 M864.5 9.4 H894.7 M903.8 9.4 H933.9 M943.0 9.4 H973.2 M982.2 9.4 H1012.4 M1021.5 9.4 H1051.7 M1060.8 9.4 H1091.0" stroke="#1c2260" stroke-width="1.2" fill="none"/></svg><span class="t" style="left:0.4px;top:-0.5px;height:18px;line-height:18px;font-family:'DejaVu Sans Mono','Liberation Mono',monospace;font-size:13.5px;letter-spacing:-0.277px;color:#1c2260">----+----1----+----2----+----3----+----4----+----5----+----6----+----7----+----8----+----9----+----0----+----1----+----2----+----3----+-</span></div>
<div class="a" style="left:247px;top:105.5px;width:7px;height:16.5px;background:#1a237e"></div>
<div class="a" style="left:248.5px;top:113.3px;width:4px;height:1.6px;background:#e8e8f4"></div>
<!-- ALZIO box -->
<div class="a" style="left:968.5px;top:1px;width:141px;height:24.5px;background:#fff;border:1px solid #222;box-sizing:border-box"></div>
<!-- window buttons -->
<div class="a" style="left:1060px;top:27px;width:18px;height:15px;background:#e3eef8;border:1px solid #b9c9da;box-sizing:border-box"></div>
<div class="a" style="left:1081px;top:27px;width:18px;height:15px;background:#e3eef8;border:1px solid #b9c9da;box-sizing:border-box"></div>
<div class="a" style="left:1102px;top:27px;width:18px;height:15px;background:#e3eef8;border:1px solid #b9c9da;box-sizing:border-box"></div>
<div class="a" style="left:1065px;top:36px;width:7px;height:2px;background:#444"></div>
<div class="a" style="left:1086px;top:32px;width:6px;height:5px;border:1px solid #444;box-sizing:border-box"></div>
<div class="a" style="left:1088px;top:30px;width:6px;height:5px;border:1px solid #444;border-left:none;border-bottom:none;box-sizing:border-box"></div>
<!-- title icon -->
<svg class="a" style="left:0;top:7px" width="14" height="14" viewBox="0 0 14 14"><rect x="0" y="1" width="12" height="12" fill="#fff" stroke="#3a2a2a" stroke-width="1.2"/><rect x="0" y="1" width="12" height="3.5" fill="#c0392b"/><rect x="1.5" y="6" width="4" height="5.5" fill="#d9534f"/><rect x="6.5" y="8" width="4.5" height="3.5" fill="#3b8a3b"/><path d="M5 6 L11 2.5" stroke="#222" stroke-width="1.2"/></svg>
<!-- menu icon -->
<svg class="a" style="left:0;top:26px" width="20" height="16" viewBox="0 0 20 16"><rect x="1.5" y="1.5" width="14" height="12" rx="2" fill="#fff" stroke="#333" stroke-width="1.3"/><path d="M5 11 L11 4 L13 5.5 L7 12 Z" fill="#c9b458" stroke="#333" stroke-width=".8"/></svg>
<!-- toolbar1 -->
<svg class="a" style="left:4px;top:45px" width="240" height="18" viewBox="0 0 240 18">
 <g><ellipse cx="9" cy="5" rx="5.5" ry="3.5" fill="#3a6ea5" stroke="#223" stroke-width="1"/><path d="M2 10 L8 7 L18 9 L12 14 Z" fill="#c2a64a" stroke="#2a2a2a" stroke-width="1.2"/><path d="M12 4 L17 3 L16 7" fill="none" stroke="#222" stroke-width="1.2"/></g>
 <g transform="translate(25 0)"><ellipse cx="8" cy="4.5" rx="5.5" ry="3.2" fill="#3a6ea5" stroke="#223" stroke-width="1"/><rect x="4" y="6.5" width="13" height="8.5" fill="#2f4f2f" stroke="#1a1a1a" stroke-width="1"/><rect x="7" y="10.5" width="6" height="4.5" fill="#dfe6df"/><rect x="14" y="3" width="3" height="5" fill="#1a1a1a"/></g>
 <g transform="translate(50 0)"><path d="M2 13 L5 6 L18 6 L15 13 Z" fill="#d8c05a" stroke="#2a2a2a" stroke-width="1.1"/><path d="M2 13 L2 4 L7 4 L8 5.5 L14 5.5 L14 6" fill="#b89a3a" stroke="#2a2a2a" stroke-width="1.1"/><path d="M13 3 Q16 0 18 3" fill="none" stroke="#222" stroke-width="1.1"/></g>
 <g transform="translate(75 0)"><rect x="2" y="2" width="11" height="10" fill="#5f9a5f" stroke="#2a3a2a" stroke-width="1"/><rect x="6" y="5" width="12" height="10" fill="#7aa87a" stroke="#2a3a2a" stroke-width="1"/><rect x="9" y="10" width="6" height="5" fill="#e8ece8"/><rect x="8" y="5" width="7" height="3" fill="#c8d0c8"/></g>
 <rect x="100" y="1" width="1" height="16" fill="#9a9a9a"/>
 <g transform="translate(107 0)"><rect x="1.5" y="2.5" width="10" height="10" fill="#f4f4f4" stroke="#555" stroke-width="1"/><rect x="5.5" y="5.5" width="11" height="10.5" rx="1.5" fill="#fafafa" stroke="#555" stroke-width="1.1"/><path d="M8 9 H14 M8 11.5 H14 M8 13.5 H12" stroke="#999" stroke-width="1"/></g>
 <rect x="132" y="1" width="1" height="16" fill="#9a9a9a"/>
 <rect x="136.5" y="0" width="24" height="17" fill="#cfe3f7" stroke="#86b7e6" stroke-width="1"/>
 <rect x="160.5" y="0" width="24.5" height="17" fill="#cfe3f7" stroke="#86b7e6" stroke-width="1"/>
 <g transform="translate(189 0)"><rect x="1.5" y="3" width="15" height="12" fill="#fff" stroke="#222" stroke-width="1.6"/><rect x="1.5" y="3" width="15" height="3" fill="#222"/><rect x="9" y="8" width="5" height="5" fill="none" stroke="#333" stroke-width="1.2"/><path d="M4 8.5 H7 M4 11 H7" stroke="#555" stroke-width="1"/></g>
 <g transform="translate(211 0)"><path d="M2 3 L2 13 L5 10.5 L7.5 15 L9.5 14 L7 9.5 L11 9.5 Z" fill="#2a56c6" stroke="#16307a" stroke-width=".8"/></g>
 <rect x="237.5" y="1" width="1" height="16" fill="#9a9a9a"/>
</svg>
<span class="t" style="left:144px;top:45px;height:17px;line-height:17px;font-family:'Liberation Serif',serif;font-weight:700;font-style:italic;font-size:15px;color:#2a4aa8;transform:scaleX(1.1)">W</span>
<span class="t" style="left:168.500px;top:46px;height:8px;line-height:8px;font-family:'Liberation Sans',sans-serif;font-weight:700;font-size:6.500px;color:#c0504d;transform:scaleX(1.15)">1<span style="color:#2a3f8f">&#8201;AB</span></span>
<span class="t" style="left:168.500px;top:53.500px;height:8px;line-height:8px;font-family:'Liberation Sans',sans-serif;font-weight:700;font-size:6.500px;color:#c0504d;transform:scaleX(1.15)">2<span style="color:#2a3f8f">&#8201;CD</span></span>
<span class="t" style="left:226px;top:44px;height:19px;line-height:19px;font-family:'Liberation Serif',serif;font-weight:700;font-size:16px;color:#111">?</span>
<!-- tab bar -->
<svg class="a" style="left:0;top:66px" width="16" height="15" viewBox="0 0 16 15"><path d="M-1 2.5 H7 L8.5 4 H13.5 V12.5 H-1 Z" fill="#f3e07e" stroke="#b9a23c" stroke-width="1"/><path d="M-1 5 H13.5" stroke="#d9c55a" stroke-width="1"/></svg>
<div class="a" style="left:51.500px;top:72px;width:4.500px;height:4.500px;background:#b5391c;transform:rotate(45deg)"></div>
<div class="a" style="left:52.800px;top:73.300px;width:2px;height:2px;background:#f0c8b0;transform:rotate(45deg)"></div>
<!-- toolbar2 -->
<svg class="a" style="left:0;top:84px" width="20" height="19" viewBox="0 0 20 19"><rect x="-1" y="2.5" width="14" height="10" fill="#fff" stroke="#333" stroke-width="1.2"/><rect x="-1" y="2.5" width="14" height="2.5" fill="#4a5a8a"/><circle cx="8.5" cy="10.5" r="3.8" fill="#dfeaf5" stroke="#335" stroke-width="1.2"/><path d="M11.5 13.5 L15 17" stroke="#335" stroke-width="1.8"/></svg>
<div class="sep" style="left:21px;top:85px;height:17px"></div>
<span class="t tb" style="left:32px;transform:scaleX(1.12)">B</span>
<span class="t tb" style="left:57px;font-style:italic;transform:scaleX(1.15)">I</span>
<span class="t tb" style="left:81.500px;text-decoration:underline;transform:scaleX(1.1)">U</span>
<span class="t tb" style="left:108.500px;transform:scaleX(1.05)">F</span>
<svg class="a" style="left:127px;top:85px" width="20" height="18" viewBox="0 0 20 18"><ellipse cx="8.5" cy="10" rx="7.2" ry="6.5" fill="#d9c79a" stroke="#3a2a1a" stroke-width="1.3"/><circle cx="5.5" cy="8" r="1.3" fill="#5a3a2a"/><circle cx="11" cy="7.5" r="1.3" fill="#5a3a2a"/><circle cx="6" cy="12.5" r="1.3" fill="#5a3a2a"/><circle cx="11.5" cy="12" r="1.3" fill="#5a3a2a"/><circle cx="8.5" cy="10" r="1.5" fill="#fff" stroke="#5a3a2a" stroke-width=".6"/><path d="M13.5 1.5 H18.5 L16 4.5 Z" fill="#222"/></svg>
<div class="sep" style="left:151px;top:85px;height:17px"></div>
<span class="t" style="left:160px;top:85px;height:18px;line-height:18px;font-family:'Liberation Serif',serif;font-size:13px;color:#111;transform:scaleX(1.22)">nb</span>
<span class="t" style="left:186.500px;top:85px;height:18px;line-height:18px;font-family:'DejaVu Sans',sans-serif;font-weight:700;font-size:11px;color:#111">&#8629;</span>
<span class="t" style="left:211px;top:85px;height:18px;line-height:18px;font-family:'Liberation Serif',serif;font-weight:700;font-size:13px;color:#111;transform:scaleX(1.15)">&#182;</span>
<span class="t tb" style="left:235.500px;transform:scaleX(1.05)">H</span>
<svg class="a" style="left:245px;top:85px" width="6" height="5" viewBox="0 0 6 5"><path d="M0 .500 H5 L2.5 3.5 Z" fill="#222"/></svg>
<div class="sep" style="left:256.500px;top:85px;height:17px"></div>
<svg class="a" style="left:262px;top:84px" width="450" height="20" viewBox="0 0 450 20">
 <g><rect x="7" y="3" width="12" height="11" fill="#f1e38a" stroke="#333" stroke-width="1"/><path d="M1.5 13 L8 6 L12 13 Z" fill="#2a2a2a"/><ellipse cx="12.5" cy="10.5" rx="4.5" ry="3.5" fill="#4f9a6a" stroke="#223" stroke-width="1"/></g>
 <g transform="translate(29 0)" fill="none" stroke="#1e2436" stroke-width="1.7"><circle cx="7.5" cy="4" r="1.8"/><path d="M7.5 6 V15.5 M3.5 8.5 H11.5 M1.5 11 Q3 15.5 7.5 15.5 Q12 15.5 13.5 11"/></g>
 <path d="M52 8.5 H69 M52 12 H69" stroke="#111" stroke-width="1.5"/>
 <g transform="translate(77 0)"><path d="M8.5 4 L2 9.5 L8.5 15 Z" fill="none" stroke="#222" stroke-width="1.2"/><path d="M10.5 5 V11" stroke="#222" stroke-width="1.6"/><rect x="9.7" y="12.5" width="1.6" height="1.6" fill="#222"/><rect x="13" y="9.5" width="1.8" height="1.8" fill="#222"/><rect x="16.2" y="9.5" width="1.8" height="1.8" fill="#222"/></g>
 <g transform="translate(103 0)"><circle cx="7.5" cy="10.5" r="6" fill="none" stroke="#222" stroke-width="1.3"/><path d="M10 8.5 A3.2 3.2 0 1 0 10 12.5" fill="none" stroke="#222" stroke-width="1.4"/><path d="M12.5 1.5 H17.5 L15 4.5 Z" fill="#222"/></g>
 <rect x="124.5" y="1" width="1" height="17" fill="#9a9a9a"/>
 <g transform="translate(133 0)"><rect x="1" y="5" width="14.5" height="10.5" fill="#fff" stroke="#222" stroke-width="1.4"/><path d="M1 9.5 H15.5 M6 5 V15.5 M10.8 5 V15.5" stroke="#222" stroke-width="1.2"/><path d="M12.5 1 H17.5 L15 4 Z" fill="#222"/></g>
 <g transform="translate(157 0)" stroke="#3a3f4a" stroke-width="1.5"><path d="M1 5 H16 M3 8 H14 M1 11 H16 M3 14 H14"/></g>
 <g transform="translate(183 0)"><rect x="0" y="3.5" width="16" height="3" fill="#8a8f99"/><path d="M4 9 H15 M4 12 H15 M6 15 H13" stroke="#3a3f4a" stroke-width="1.5"/></g>
 <g transform="translate(232 0)"><rect x="1" y="5" width="2" height="2" fill="#222"/><rect x="1" y="9" width="2" height="2" fill="#222"/><rect x="1" y="13" width="2" height="2" fill="#222"/><path d="M5.5 6 H15 M5.5 10 H15 M5.5 14 H15" stroke="#333" stroke-width="1.4"/><path d="M12 1 H17 L14.5 4 Z" fill="#222"/></g>
 <rect x="254.5" y="1" width="1" height="17" fill="#9a9a9a"/>
 <g transform="translate(263 0)"><rect x="1" y="4" width="13" height="12" rx="1" fill="#f5f5f0" stroke="#333" stroke-width="1.2"/><path d="M3 3 V5.5 M6 3 V5.5 M9 3 V5.5 M12 3 V5.5" stroke="#333" stroke-width="1"/><path d="M3.5 8.5 H11 M3.5 11 H9 M3.5 13.5 H8" stroke="#555" stroke-width="1"/><path d="M9 14.5 L15.5 6.5 L17.5 8 L11 16 Z" fill="#e8c84a" stroke="#333" stroke-width=".8"/></g>
 <g transform="translate(312 0)"><circle cx="5" cy="12.5" r="3.8" fill="#d63a1a"/><circle cx="7.5" cy="6" r="3.8" fill="#3c9a3c"/><ellipse cx="12.5" cy="10.5" rx="4" ry="3" fill="#e0b43a"/><path d="M13 1 H18 L15.5 4 Z" fill="#222"/></g>
 <rect x="335.5" y="1" width="1" height="17" fill="#9a9a9a"/>
 <g transform="translate(344 0)" fill="none" stroke="#222" stroke-width="1.4"><path d="M1 6 H5 L6.5 4.5 H12 V7.5 M1 6 V13 H12 V7.5 M12 13 L15.5 15 M12 13 H15.5"/></g>
 <g transform="translate(371 0)" fill="none" stroke="#222" stroke-width="1.4"><path d="M2 7 H13 V14 H2 M2 7 Q0 10.5 2 14"/><path d="M11 1.5 H16 L13.5 4.5 Z" fill="#222" stroke="none"/><path d="M4 5 H12" stroke="#666"/></g>
 <rect x="392" y="1" width="1" height="17" fill="#9a9a9a"/>
 <g transform="translate(400 0)"><rect x="1" y="3" width="7" height="6" fill="#d9442a"/><rect x="9" y="3" width="7" height="6" fill="#3c9a4a"/><rect x="1" y="10" width="7" height="6" fill="#2a56c6"/><rect x="9" y="10" width="7" height="6" fill="#f0f0e8" stroke="#333" stroke-width=".6"/><path d="M11 8 V16 L13 14 L14.5 17 L15.5 16.5 L14 13.5 H16.5 Z" fill="#222"/></g>
 <g transform="translate(425 0)"><rect x="1" y="4" width="15.5" height="12" rx="1.5" fill="#fff" stroke="#222" stroke-width="1.4"/><path d="M1 7.5 H16.5 M5.5 7.5 V16" stroke="#222" stroke-width="1.2"/></g>
</svg>
<span class="t" style="left:468px;top:86px;height:16px;line-height:16px;font-family:'Liberation Serif',serif;font-weight:700;font-size:8px;color:#111;transform:scaleX(1.13)">PRE</span>
<span class="t tb" style="left:552.500px;transform:scaleX(1.0)">J</span>
<div class="sep" style="left:597.500px;top:85px;height:17px"></div>

<!-- bottom: h scrollbar, status -->
<div class="a" style="left:0;top:587px;width:1109px;height:15px;background:#ececec"></div>
<div class="a" style="left:0;top:586px;width:3px;height:13px;border-right:2px solid #333;border-bottom:2px solid #333;box-sizing:border-box"></div>
<div class="a" style="left:0;top:602px;width:1109px;height:17px;background:#f1f1f0"></div>
<div class="a" style="left:0;top:601px;width:1109px;height:1px;background:#d4d4d4"></div>
<div class="a" style="left:0;top:618.5px;width:1109px;height:6px;background:#dddc5e"></div>
<div class="sep" style="left:722px;top:603px;height:14px;background:#c4c4c4"></div>
<div class="sep" style="left:781px;top:603px;height:14px;background:#c4c4c4"></div>
<div class="sep" style="left:836px;top:603px;height:14px;background:#c4c4c4"></div>
<div class="sep" style="left:872px;top:603px;height:14px;background:#c4c4c4"></div>
<div class="sep" style="left:932px;top:603px;height:14px;background:#c4c4c4"></div>
<div class="sep" style="left:995px;top:603px;height:14px;background:#c4c4c4"></div>
<div class="sep" style="left:1030px;top:603px;height:14px;background:#c4c4c4"></div>
<div class="sep" style="left:1054px;top:603px;height:14px;background:#c4c4c4"></div>
<div class="sep" style="left:1078px;top:603px;height:14px;background:#c4c4c4"></div>
<span class="t" style="left:10px;top:586px;height:16px;line-height:16px;font-size:11px;color:#888;font-family:'DejaVu Sans',sans-serif;transform:scaleX(1.2)">&lt;</span>
<span class="t" style="left:1089px;top:586px;height:16px;line-height:16px;font-size:11px;color:#888;font-family:'DejaVu Sans',sans-serif;transform:scaleX(1.2)">&gt;</span>
<span class="t" style="left:369.0px;top:3.0px;height:20px;line-height:20px;font-family:'DejaVu Sans','NanumGothic','Noto Sans CJK KR',sans-serif;font-size:14px;font-weight:400;color:#2b2b2b;transform:scaleX(1.055);-webkit-text-stroke:0.2px #2b2b2b;">EditPlus - [D:₩LEC_javascript [실무]₩ex_02.html *]</span>
<span class="t" style="left:27.5px;top:25.5px;height:18px;line-height:18px;font-family:'NanumGothic','Noto Sans CJK KR',sans-serif;font-size:12px;font-weight:400;color:#1c1c1c;transform:scaleX(1.099);-webkit-text-stroke:0.25px #1c1c1c;">파일(<u>F</u>)</span>
<span class="t" style="left:86.0px;top:25.5px;height:18px;line-height:18px;font-family:'NanumGothic','Noto Sans CJK KR',sans-serif;font-size:12px;font-weight:400;color:#1c1c1c;transform:scaleX(1.074);-webkit-text-stroke:0.25px #1c1c1c;">편집(<u>E</u>)</span>
<span class="t" style="left:144.5px;top:25.5px;height:18px;line-height:18px;font-family:'NanumGothic','Noto Sans CJK KR',sans-serif;font-size:12px;font-weight:400;color:#1c1c1c;transform:scaleX(1.082);-webkit-text-stroke:0.25px #1c1c1c;">보기(<u>V</u>)</span>
<span class="t" style="left:204.0px;top:25.5px;height:18px;line-height:18px;font-family:'NanumGothic','Noto Sans CJK KR',sans-serif;font-size:12px;font-weight:400;color:#1c1c1c;transform:scaleX(1.137);-webkit-text-stroke:0.25px #1c1c1c;">검색(<u>S</u>)</span>
<span class="t" style="left:263.0px;top:25.5px;height:18px;line-height:18px;font-family:'NanumGothic','Noto Sans CJK KR',sans-serif;font-size:12px;font-weight:400;color:#1c1c1c;transform:scaleX(1.125);-webkit-text-stroke:0.25px #1c1c1c;">문서(<u>D</u>)</span>
<span class="t" style="left:325.5px;top:25.5px;height:18px;line-height:18px;font-family:'NanumGothic','Noto Sans CJK KR',sans-serif;font-size:12px;font-weight:400;color:#1c1c1c;transform:scaleX(1.144);-webkit-text-stroke:0.25px #1c1c1c;">프로젝트(<u>P</u>)</span>
<span class="t" style="left:411.5px;top:25.5px;height:18px;line-height:18px;font-family:'NanumGothic','Noto Sans CJK KR',sans-serif;font-size:12px;font-weight:400;color:#1c1c1c;transform:scaleX(1.084);-webkit-text-stroke:0.25px #1c1c1c;">도구(<u>T</u>)</span>
<span class="t" style="left:469.5px;top:25.5px;height:18px;line-height:18px;font-family:'NanumGothic','Noto Sans CJK KR',sans-serif;font-size:12px;font-weight:400;color:#1c1c1c;transform:scaleX(1.137);-webkit-text-stroke:0.25px #1c1c1c;">브라우저(<u>B</u>)</span>
<span class="t" style="left:555.0px;top:25.5px;height:18px;line-height:18px;font-family:'NanumGothic','Noto Sans CJK KR',sans-serif;font-size:12px;font-weight:400;color:#1c1c1c;transform:scaleX(1.082);-webkit-text-stroke:0.25px #1c1c1c;">창(<u>W</u>)</span>
<span class="t" style="left:606.5px;top:25.5px;height:18px;line-height:18px;font-family:'NanumGothic','Noto Sans CJK KR',sans-serif;font-size:12px;font-weight:400;color:#1c1c1c;transform:scaleX(1.141);-webkit-text-stroke:0.25px #1c1c1c;">도움말(<u>H</u>)</span>
<span class="t" style="left:62.0px;top:65.5px;height:17px;line-height:17px;font-family:'DejaVu Sans','NanumGothic','Noto Sans CJK KR',sans-serif;font-size:11px;font-weight:400;color:#222;transform:scaleX(1.079);">ex_02.html</span>
<span class="t" style="left:-3.0px;top:602.5px;height:17px;line-height:17px;font-family:'NanumGothic','Noto Sans CJK KR',sans-serif;font-size:11px;font-weight:400;color:#111;transform:scaleX(1.294);-webkit-text-stroke:0.3px #111;">도움말을 보려면 &lt;F1&gt; 키를 누르십시오.</span>
<span class="t" style="left:653.0px;top:602.5px;height:17px;line-height:17px;font-family:'NanumGothic','Noto Sans CJK KR',sans-serif;font-size:11px;font-weight:400;color:#111;transform:scaleX(1.443);">줄 9</span>
<span class="t" style="left:728.0px;top:602.5px;height:17px;line-height:17px;font-family:'NanumGothic','Noto Sans CJK KR',sans-serif;font-size:11px;font-weight:400;color:#111;transform:scaleX(1.308);">칸 27</span>
<span class="t" style="left:786.5px;top:603.0px;height:16px;line-height:16px;font-family:'DejaVu Sans','NanumGothic','Noto Sans CJK KR',sans-serif;font-size:10px;font-weight:400;color:#111;transform:scaleX(1.296);">60</span>
<span class="t" style="left:842.5px;top:603.0px;height:16px;line-height:16px;font-family:'DejaVu Sans','NanumGothic','Noto Sans CJK KR',sans-serif;font-size:10px;font-weight:400;color:#111;transform:scaleX(1.296);">00</span>
<span class="t" style="left:878.0px;top:603.0px;height:16px;line-height:16px;font-family:'DejaVu Sans','NanumGothic','Noto Sans CJK KR',sans-serif;font-size:10px;font-weight:400;color:#111;transform:scaleX(1.383);">PC</span>
<span class="t" style="left:937.5px;top:603.0px;height:16px;line-height:16px;font-family:'DejaVu Sans','NanumGothic','Noto Sans CJK KR',sans-serif;font-size:10px;font-weight:400;color:#111;transform:scaleX(1.252);">UTF-8</span>
<span class="t" style="left:985.5px;top:1.0px;height:11.5px;line-height:11.5px;font-family:'DejaVu Sans','NanumGothic','Noto Sans CJK KR',sans-serif;font-size:5.5px;font-weight:700;color:#1a2a6c;transform:scaleX(1.488);-webkit-text-stroke:0.35px #1a2a6c;">ALZIO</span>
<span class="t" style="left:985.5px;top:8.5px;height:17px;line-height:17px;font-family:'NanumGothic','Noto Sans CJK KR',sans-serif;font-size:11px;font-weight:800;color:#111;transform:scaleX(1.669);">IT전문교육</span>
<span class="t" style="left:1072.2px;top:9.8px;height:15px;line-height:15px;font-family:'NanumGothic','Noto Sans CJK KR',sans-serif;font-size:9px;font-weight:400;color:#222;transform:scaleX(1.426);">의 리더</span>
</div>
</body></html>
